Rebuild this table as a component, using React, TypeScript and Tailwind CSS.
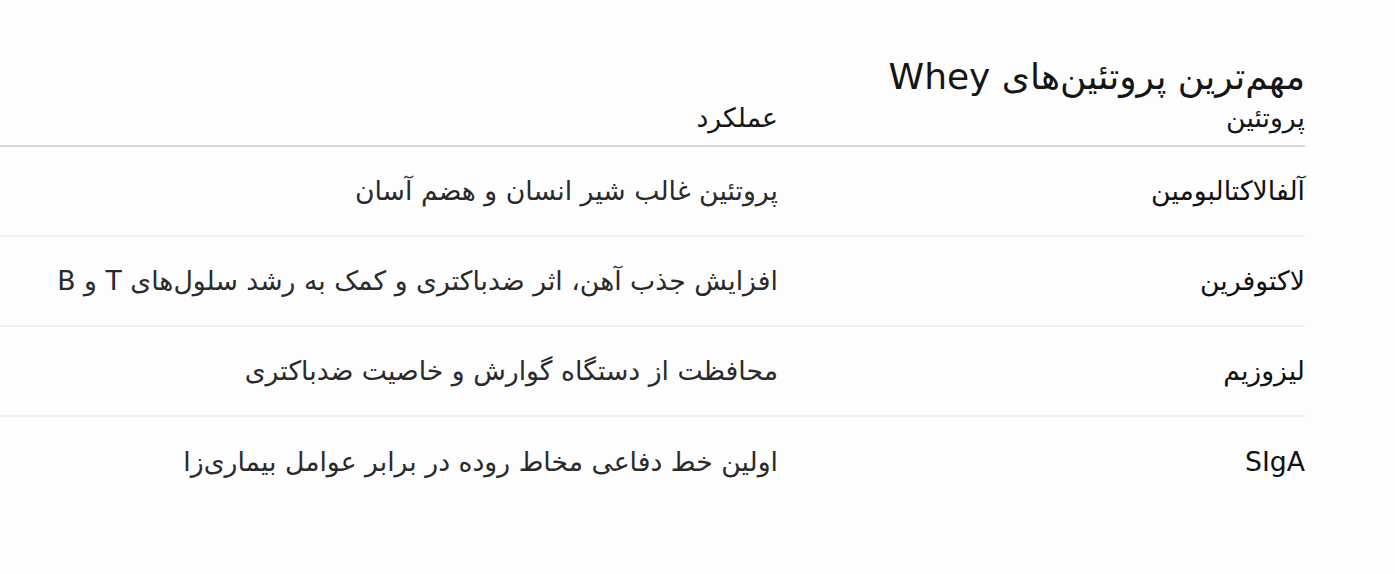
const rows = [
  { name: "آلفالاکتالبومین", role: "پروتئین غالب شیر انسان و هضم آسان" },
  { name: "لاکتوفرین", role: "افزایش جذب آهن، اثر ضدباکتری و کمک به رشد سلول‌های T و B" },
  { name: "لیزوزیم", role: "محافظت از دستگاه گوارش و خاصیت ضدباکتری" },
  { name: "SIgA", role: "اولین خط دفاعی مخاط روده در برابر عوامل بیماری‌زا" },
];

export default function App() {
  return (
    <div
      dir="rtl"
      className="min-h-screen bg-[#fdfdfd] pr-[90px] pt-[55px] text-[#151515]"
      style={{ fontFamily: '"DejaVu Sans", sans-serif' }}
    >
      <h2 className="text-[36px] leading-[43px] font-normal">مهم‌ترین پروتئین‌های Whey</h2>
      <table className="mt-[1px] w-full border-collapse text-right">
        <thead>
          <tr className="border-b-2 border-[#d6d6d6]">
            <th className="w-[527px] pb-[8px] text-[26.7px] font-normal leading-[38px]">پروتئین</th>
            <th className="pb-[8px] text-[26.7px] font-normal leading-[38px]">عملکرد</th>
          </tr>
        </thead>
        <tbody>
          {rows.map((r, i) => (
            <tr key={r.name} className={i < rows.length - 1 ? "border-b-2 border-[#f0f0f0]" : ""}>
              <td className="h-[90px] text-[26.7px] leading-[40px] text-[#111]">{r.name}</td>
              <td className="h-[90px] text-[26.7px] leading-[40px] text-[#2a2a2a]">{r.role}</td>
            </tr>
          ))}
        </tbody>
      </table>
    </div>
  );
}
